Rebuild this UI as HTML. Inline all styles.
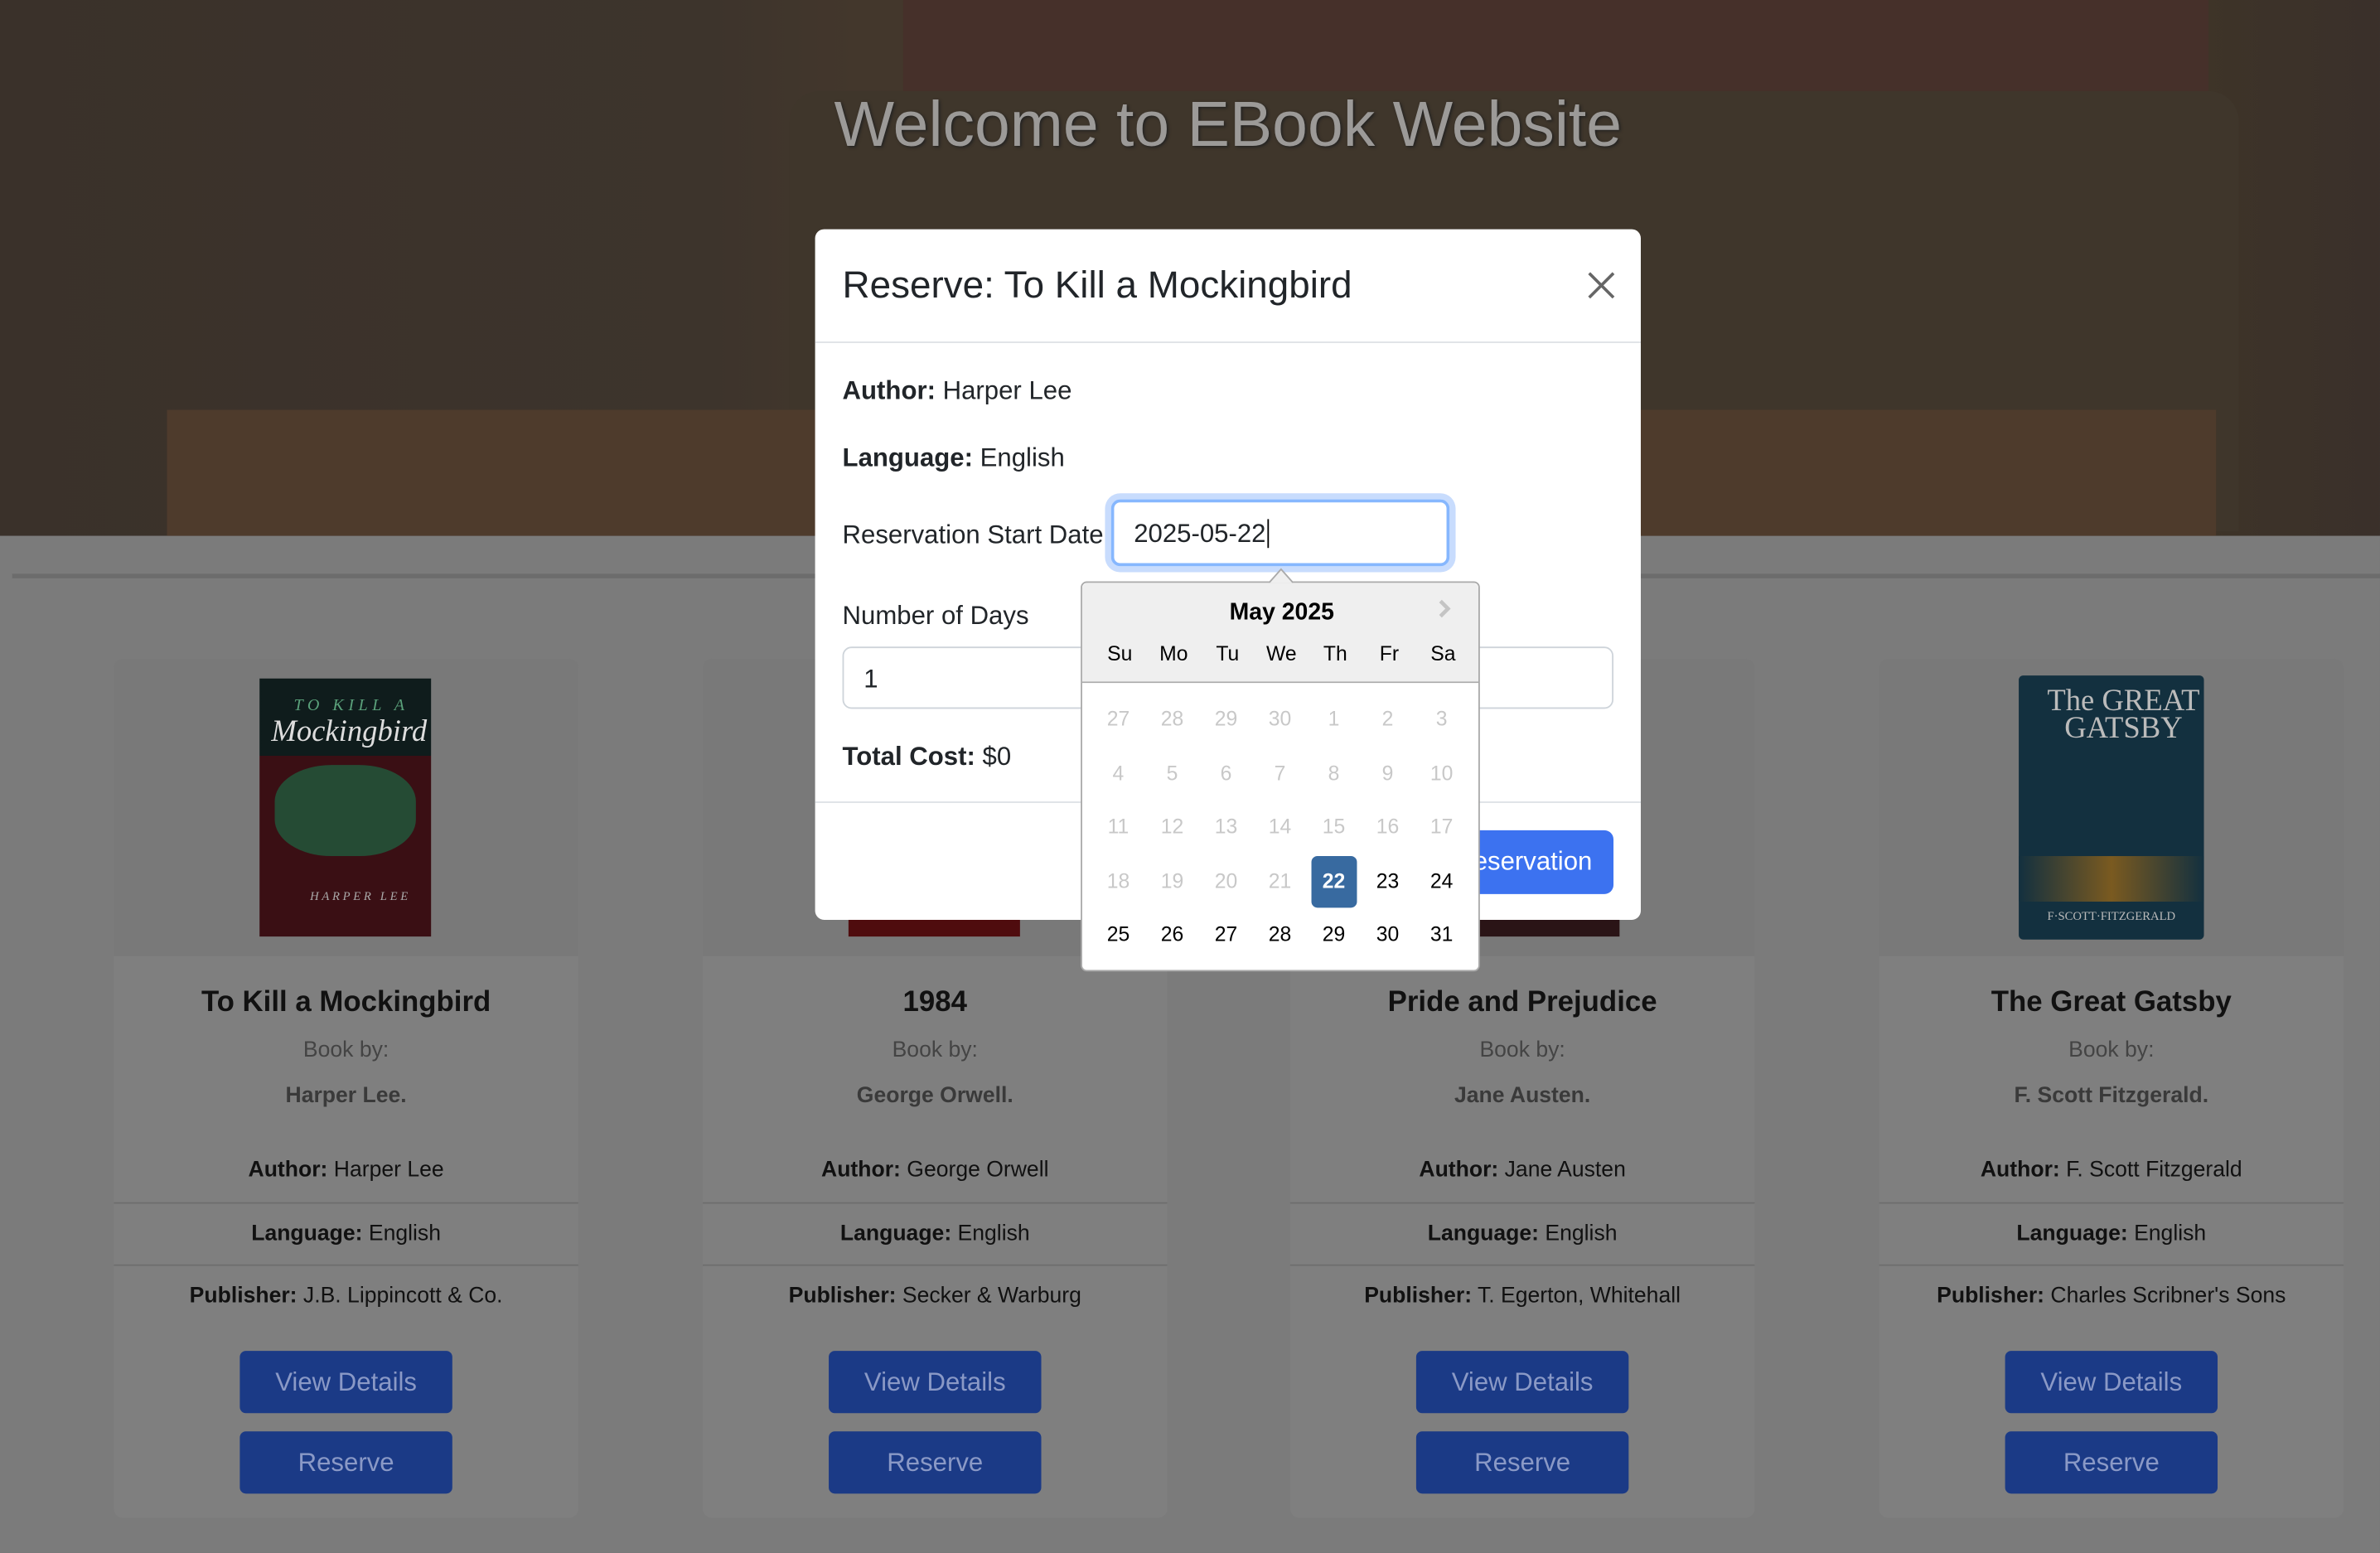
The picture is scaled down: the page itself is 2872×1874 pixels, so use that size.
<!DOCTYPE html>
<html><head><meta charset="utf-8"><style>
*{box-sizing:border-box;margin:0;padding:0}
html,body{width:2872px;height:1874px;overflow:hidden;background:#7a7a7a}
#s{width:1568px;height:1023px;transform:scale(1.83163);transform-origin:0 0;position:relative;font-family:"Liberation Sans",Arial,sans-serif;overflow:hidden;background:#7b7b7b}
.hero{position:absolute;left:0;top:0;width:1568px;height:353px;background:linear-gradient(90deg,#3a312a 0%,#3d342c 30%,#43372c 36%,#413629 60%,#3e3428 92%,#3a302a 100%)}
.hero .b1{position:absolute;left:595px;top:0;width:860px;height:60px;background:#46302a}
.hero .b2{position:absolute;left:520px;top:60px;width:955px;height:290px;background:#3f362b;border-radius:20px 20px 0 0}
.hero .b3{position:absolute;left:110px;top:270px;width:1350px;height:83px;background:#4e3b2c}
.hero h1{position:absolute;left:0;width:1618px;top:58px;text-align:center;font-size:42px;font-weight:normal;color:#9c9a98;text-shadow:1px 1px 2px #222}
.line{position:absolute;left:8px;top:378px;width:1560px;height:3px;background:#6c6c6c}
.card{position:absolute;top:434px;width:306px;height:566px;background:#7f7f7f;border-radius:6px;text-align:center;color:#111;font-size:14.5px}
.card .img{height:196px;background:#797979;border-radius:6px 6px 0 0;position:relative}
.cover{position:absolute;left:96px;top:13px;width:113px;height:170px}
.card h3{margin-top:20px;font-size:19px;font-weight:bold}
.card .by{color:#444;margin-top:12px;font-size:14.5px}
.card .an{color:#3a3a3a;font-weight:bold;margin-top:14px}
.row{height:41px;line-height:41px;border-top:1px solid #6e6e6e}
.row:first-of-type{border-top:none}
.rows{margin-top:21px}
.btn{display:block;margin:0 auto;width:140px;height:41px;line-height:41px;background:#1b3a86;color:#8a99c6;border-radius:4px;font-size:17px}
.modal{position:absolute;left:537px;top:151px;width:544px;height:455px;background:#fff;border-radius:6px}
.modal .hd{height:75px;border-bottom:1px solid #dee2e6;padding:23px 18px;font-size:25px;color:#212529}
.x{position:absolute;right:16px;top:27px;width:20px;height:20px}
.modal .f{position:absolute;left:18px;font-size:17px;color:#212529}
.inp{position:absolute;border:1px solid #ced4da;border-radius:6px;font-size:17px;padding-left:13px;color:#212529}
.dp{position:absolute;left:712px;top:383px;width:263px;height:257px;background:#fff;border:1px solid #aaa;border-radius:4px;font-family:"Liberation Sans",Arial,sans-serif;font-size:14px}
.dp .top{height:66px;background:#efefef;border-bottom:1px solid #aaa;border-radius:4px 4px 0 0;position:relative}
.c{position:absolute;width:35.5px;text-align:center}
</style></head><body><div id="s">
<div class="hero"><div class="b1"></div><div class="b2"></div><div class="b3"></div><h1>Welcome to EBook Website</h1></div>
<div class="line"></div>

<div class="card" style="left:75px"><div class="img"><div class="cover" style="background:linear-gradient(#0f1c1c 0 30%,#3a0f14 30%);"><div style="color:#5aa07a;font:italic 11px 'Liberation Serif',serif;letter-spacing:3px;margin:12px 0 0 8px">TO KILL A</div><div style="color:#ddd;font:italic 20px 'Liberation Serif',serif;margin-left:5px">Mockingbird</div><div style="margin:10px 10px 0;height:60px;background:#215a3c;border-radius:40%;opacity:.8"></div><div style="color:#aaa;font:italic 8px serif;letter-spacing:2px;margin:22px 0 0 20px">HARPER LEE</div></div></div>
<h3>To Kill a Mockingbird</h3><div class="by">Book by:</div><div class="an">Harper Lee.</div>
<div class="rows"><div class="row"><b>Author:</b> Harper Lee</div><div class="row"><b>Language:</b> English</div><div class="row"><b>Publisher:</b> J.B. Lippincott &amp; Co.</div></div>
<div style="margin-top:16px"><div class="btn">View Details</div><div class="btn" style="margin-top:12px">Reserve</div></div></div>

<div class="card" style="left:463px"><div class="img"><div class="cover" style="background:#4f0c0e;left:96px"></div></div>
<h3>1984</h3><div class="by">Book by:</div><div class="an">George Orwell.</div>
<div class="rows"><div class="row"><b>Author:</b> George Orwell</div><div class="row"><b>Language:</b> English</div><div class="row"><b>Publisher:</b> Secker &amp; Warburg</div></div>
<div style="margin-top:16px"><div class="btn">View Details</div><div class="btn" style="margin-top:12px">Reserve</div></div></div>

<div class="card" style="left:850px"><div class="img"><div class="cover" style="background:#2a1416;left:125px;width:92px"></div></div>
<h3>Pride and Prejudice</h3><div class="by">Book by:</div><div class="an">Jane Austen.</div>
<div class="rows"><div class="row"><b>Author:</b> Jane Austen</div><div class="row"><b>Language:</b> English</div><div class="row"><b>Publisher:</b> T. Egerton, Whitehall</div></div>
<div style="margin-top:16px"><div class="btn">View Details</div><div class="btn" style="margin-top:12px">Reserve</div></div></div>

<div class="card" style="left:1238px"><div class="img"><div class="cover" style="background:#13303f;left:92px;top:11px;width:122px;height:174px;border-radius:3px"><div style="color:#bbb;font:20px 'Liberation Serif',serif;line-height:18px;margin:8px 0 0 16px">The GREAT<br>GATSBY</div><div style="margin:75px 0 0;height:30px;background:linear-gradient(90deg,#13303f,#7a5a20,#13303f)"></div><div style="color:#bbb;font:8px serif;text-align:center;margin-top:5px">F·SCOTT·FITZGERALD</div></div></div>
<h3>The Great Gatsby</h3><div class="by">Book by:</div><div class="an">F. Scott Fitzgerald.</div>
<div class="rows"><div class="row"><b>Author:</b> F. Scott Fitzgerald</div><div class="row"><b>Language:</b> English</div><div class="row"><b>Publisher:</b> Charles Scribner's Sons</div></div>
<div style="margin-top:16px"><div class="btn">View Details</div><div class="btn" style="margin-top:12px">Reserve</div></div></div>

<div class="modal">
<div class="hd">Reserve: To Kill a Mockingbird</div>
<svg class="x" viewBox="0 0 20 20"><path d="M2 2L18 18M18 2L2 18" stroke="#666" stroke-width="2"/></svg>
<div class="f" style="top:97px"><b>Author:</b> Harper Lee</div>
<div class="f" style="top:141px"><b>Language:</b> English</div>
<div class="f" style="top:192px">Reservation Start Date</div>
<div class="inp" style="left:195px;top:178px;width:223px;height:44px;border:2px solid #86b7fe;box-shadow:0 0 0 4px #c8dcfd;line-height:42px">2025-05-22<span style="border-left:1px solid #000;margin-left:1px"></span></div>
<div class="f" style="top:245px">Number of Days</div>
<div class="inp" style="left:18px;top:275px;width:508px;height:41px;line-height:41px">1</div>
<div class="f" style="top:338px"><b>Total Cost:</b> $0</div>
<div style="position:absolute;left:0;top:377px;width:544px;border-top:1px solid #dee2e6"></div>
<div style="position:absolute;left:350px;top:396px;width:176px;height:42px;background:#3c72f0;border-radius:6px;color:#fff;font-size:17px;line-height:42px;text-align:right;padding-right:14px">Confirm Reservation</div>
</div>

<div class="dp">
<svg style="position:absolute;left:123px;top:-10px" width="16" height="11"><path d="M0 10L8 1L16 10" fill="#efefef" stroke="#aaa"/></svg>
<div class="top">
<div style="position:absolute;left:0;width:263px;top:11px;text-align:center;font-weight:bold;font-size:15.5px;color:#000">May 2025</div>
<svg style="position:absolute;left:234px;top:10px" width="10" height="14"><path d="M2 2L7 7L2 12" stroke="#c4c4c4" stroke-width="2.5" fill="none"/></svg>
<div style="position:absolute;top:39px;left:7px;width:250px;color:#000;font-size:13.5px">
<span class="c" style="left:0">Su</span><span class="c" style="left:35.5px">Mo</span><span class="c" style="left:71px">Tu</span><span class="c" style="left:106.5px">We</span><span class="c" style="left:142px">Th</span><span class="c" style="left:177.5px">Fr</span><span class="c" style="left:213px">Sa</span></div>
</div>
<div id="g" style="position:absolute;left:6px;top:0;width:250px;font-size:13.5px"></div>
</div>
<script>
var d=[27,28,29,30,1,2,3,4,5,6,7,8,9,10,11,12,13,14,15,16,17,18,19,20,21,22,23,24,25,26,27,28,29,30,31],h='';
for(var i=0;i<35;i++){var r=Math.floor(i/7),c=i%7,y=82+r*35.5,col=i<25?'#c8c8c8':'#000',ex='';
if(i==25){col='#fff';ex='background:#386aa0;border-radius:4px;font-weight:bold;width:30px;height:34px;line-height:34px;margin-left:2.75px;';y-=9;}
h+='<span class="c" style="left:'+(c*35.5)+'px;top:'+y+'px;color:'+col+';'+ex+'">'+d[i]+'</span>';}
document.getElementById('g').innerHTML=h;
</script>
</div></body></html>
